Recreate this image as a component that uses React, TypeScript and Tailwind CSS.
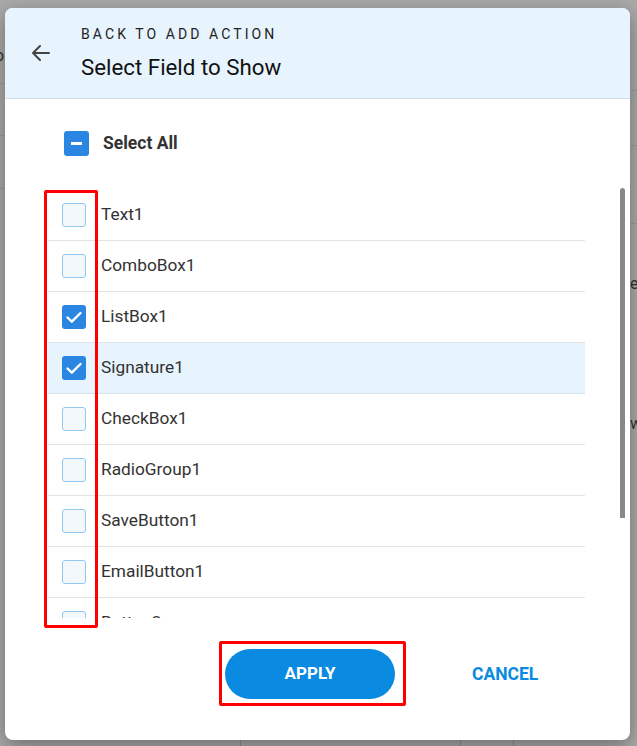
import React from "react";

const items = [
  { name: "Text1", checked: false },
  { name: "ComboBox1", checked: false },
  { name: "ListBox1", checked: true },
  { name: "Signature1", checked: true, active: true },
  { name: "CheckBox1", checked: false },
  { name: "RadioGroup1", checked: false },
  { name: "SaveButton1", checked: false },
  { name: "EmailButton1", checked: false },
  { name: "Button2", checked: false },
];

function Check({ checked }: { checked: boolean }) {
  if (checked) {
    return (
      <div className="flex h-[24px] w-[24px] shrink-0 items-center justify-center rounded-[3px] bg-[#2a86e0]">
        <svg width="24" height="24" viewBox="0 0 24 24" fill="none">
          <path d="M5.5 12.5l4.3 4.2L18.5 8" stroke="#fff" strokeWidth="2.4" strokeLinecap="round" strokeLinejoin="round" />
        </svg>
      </div>
    );
  }
  return <div className="h-[24px] w-[24px] shrink-0 rounded-[3px] border-[1.5px] border-[#92c9f1] bg-[#f3f8fd]" />;
}

export default function App() {
  return (
    <div className="relative h-[746px] w-[637px] overflow-hidden bg-[#a9a9a9]" style={{ fontFamily: "Roboto, 'Noto Sans', sans-serif" }}>
      {/* underlying page hints */}
      <div className="absolute left-0 top-[83px] h-px w-[10px] bg-[#9c9c9c]" />
      <div className="absolute left-0 top-[135px] h-px w-[10px] bg-[#9c9c9c]" />
      <div className="absolute left-0 top-[188px] h-px w-[10px] bg-[#9c9c9c]" />
      <div className="absolute right-0 top-[90px] h-px w-[10px] bg-[#9c9c9c]" />
      <div className="absolute right-0 top-[145px] h-px w-[10px] bg-[#9c9c9c]" />
      <div className="absolute right-0 top-[223px] h-px w-[10px] bg-[#9c9c9c]" />
      <div className="absolute left-[240px] top-[738px] h-[10px] w-px bg-[#8f8f8f]" />
      <div className="absolute left-[460px] top-[738px] h-[10px] w-px bg-[#8f8f8f]" />
      <div className="absolute left-[513px] top-[738px] h-[10px] w-px bg-[#8f8f8f]" />
      <div className="absolute left-[-5px] top-[44px] text-[16px] text-[#333]">o</div>
      <div className="absolute left-[630px] top-[272px] text-[16px] text-[#333]">e</div>
      <div className="absolute left-[630px] top-[412px] text-[16px] text-[#333]">w</div>

      {/* dialog */}
      <div className="absolute left-[5px] top-[8px] flex h-[732px] w-[625px] flex-col overflow-hidden rounded-[8px] bg-white shadow-[0_6px_20px_rgba(0,0,0,0.35)]">
        <div className="flex h-[91px] shrink-0 items-center border-b border-[#cfdde8] bg-[#e7f3fd]">
          <div className="ml-[24px] flex w-[52px] items-center">
            <svg width="24" height="24" viewBox="0 0 24 24" fill="none">
              <path d="M20 12H5M11 5l-7 7 7 7" stroke="#444" strokeWidth="2" strokeLinecap="round" strokeLinejoin="round" />
            </svg>
          </div>
          <div className="-mt-[1px] flex flex-col">
            <div className="text-[14px] leading-[18px] tracking-[0.22em] text-[#222]">BACK TO ADD ACTION</div>
            <div className="mt-[11px] text-[22.3px] leading-[26px] text-[#111]">Select Field to Show</div>
          </div>
        </div>

        <div className="flex h-[89px] shrink-0 items-center pl-[59px]">
          <div className="flex h-[25px] w-[25px] items-center justify-center rounded-[3px] bg-[#2a86e0]">
            <div className="h-[2.5px] w-[11px] bg-white" />
          </div>
          <div className="ml-[14px] text-[17.5px] font-bold text-[#333]">Select All</div>
        </div>

        <div className="flex h-[430px] shrink-0">
          <div className="ml-[43px] mt-[2px] w-[537px] overflow-hidden">
            {items.map((it) => (
              <div
                key={it.name}
                className={`flex h-[51px] items-center border-b pl-[14px] ${it.active ? "bg-[#e7f3fd] border-[#d4e2ec]" : "border-[#e4e4e4]"}`}
              >
                <Check checked={it.checked} />
                <div className="ml-[15px] text-[17.3px] text-[#333]">{it.name}</div>
              </div>
            ))}
          </div>
          <div className="ml-[35px] h-[330px] w-[5px] rounded-t-full bg-[#888]" />
        </div>

        <div className="mt-[31px] flex items-center">
          <div className="ml-[220px] flex h-[50px] w-[170px] items-center justify-center rounded-full bg-[#0a8ae0] text-[17px] font-bold text-white">
            APPLY
          </div>
          <div className="ml-[77px] text-[17.5px] font-bold text-[#0a8ae0]">CANCEL</div>
        </div>
      </div>

      {/* annotation boxes */}
      <div className="absolute left-[44px] top-[190px] h-[438px] w-[54px] rounded-[2px] border-[3px] border-[#ff0000]" />
      <div className="absolute left-[219px] top-[641px] h-[65px] w-[187px] rounded-[2px] border-[3px] border-[#ff0000]" />
    </div>
  );
}
